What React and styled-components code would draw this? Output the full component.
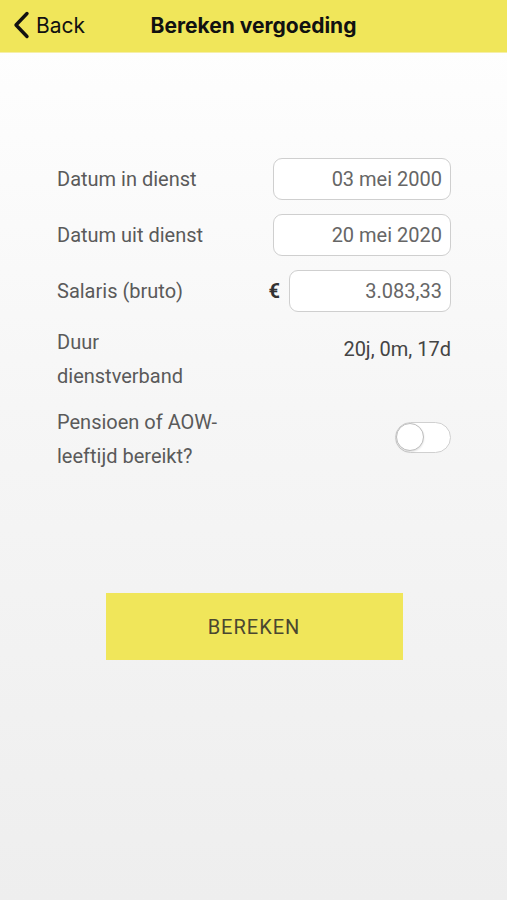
import React, { useState } from 'react';
import styled, { createGlobalStyle } from 'styled-components';

const GlobalStyle = createGlobalStyle`
  html, body {
    margin: 0;
    padding: 0;
  }
  body {
    min-height: 900px;
    background: linear-gradient(180deg, #ffffff 0%, #f6f6f6 45%, #eeeeee 100%);
    font-family: Roboto, "Liberation Sans", sans-serif;
  }
`;

const Page = styled.div`
  min-height: 900px;
  display: flex;
  flex-direction: column;
`;

const Header = styled.header`
  height: 53px;
  background: #f0e65a;
  border-bottom: 1px solid #f6efa8;
  display: grid;
  grid-template-columns: 1fr auto 1fr;
  align-items: center;
  padding-bottom: 2px;
  box-sizing: border-box;
  font-family: Inter, "Liberation Sans", sans-serif;
  color: #111;
`;

const BackButton = styled.button`
  justify-self: start;
  display: flex;
  align-items: center;
  gap: 6px;
  margin-left: 12px;
  padding: 0;
  border: none;
  background: none;
  font-family: inherit;
  font-size: 21px;
  color: #111;
  cursor: pointer;
`;

const Title = styled.h1`
  margin: 0;
  font-size: 21px;
  font-weight: 700;
`;

const Form = styled.main`
  padding: 105px 56px 0 57px;
  display: flex;
  flex-direction: column;
`;

const Row = styled.div`
  display: flex;
  align-items: ${(p) => (p.top ? 'flex-start' : 'center')};
  justify-content: space-between;
  margin-bottom: ${(p) => p.gap ?? 14}px;
`;

const Label = styled.div`
  font-size: 20px;
  line-height: 34px;
  color: #5a5a5a;
  width: ${(p) => p.width || 'auto'};
`;

const InputBox = styled.div`
  width: ${(p) => p.width}px;
  height: 42px;
  box-sizing: border-box;
  border: 1px solid #cfcfcf;
  border-radius: 9px;
  background: #fff;
  display: flex;
  align-items: center;
  justify-content: flex-end;
  padding-right: 8px;
  font-size: 20px;
  color: #666;
`;

const Money = styled.div`
  display: flex;
  align-items: center;
  gap: 9px;
`;

const Euro = styled.span`
  font-size: 20px;
  font-weight: 700;
  color: #333;
`;

const Value = styled.div`
  font-size: 20px;
  line-height: 34px;
  color: #444;
  padding-top: 7px;
`;

const Toggle = styled.button`
  width: 56px;
  height: 31px;
  padding: 0;
  border-radius: 16px;
  border: 1.5px solid #d0d0d0;
  background: ${(p) => (p.on ? '#f0e65a' : '#fff')};
  position: relative;
  cursor: pointer;
  margin-top: -4px;

  &::after {
    content: '';
    position: absolute;
    top: 0;
    left: ${(p) => (p.on ? '25px' : '0')};
    width: 28px;
    height: 28px;
    box-sizing: border-box;
    border-radius: 50%;
    border: 1.5px solid #bdbdbd;
    background: #fff;
    box-shadow: 0 1px 2px rgba(0, 0, 0, 0.12);
  }
`;

const SubmitButton = styled.button`
  align-self: center;
  margin-top: 120px;
  width: 297px;
  height: 67px;
  border: none;
  background: #f0e65a;
  font-family: Roboto, "Liberation Sans", sans-serif;
  font-size: 20px;
  letter-spacing: 1px;
  color: #4a4630;
  cursor: pointer;
`;

const ChevronLeft = () => (
  <svg width="18" height="28" viewBox="0 0 18 28">
    <polyline
      points="15,2.5 4,14 15,25.5"
      fill="none"
      stroke="#111"
      strokeWidth="3.4"
      strokeLinecap="round"
      strokeLinejoin="round"
    />
  </svg>
);

const App = () => {
  const [pension, setPension] = useState(false);

  return (
    <>
      <GlobalStyle />
      <Page>
        <Header>
          <BackButton>
            <ChevronLeft />
            Back
          </BackButton>
          <Title>Bereken vergoeding</Title>
          <span />
        </Header>

        <Form>
          <Row>
            <Label>Datum in dienst</Label>
            <InputBox width={178}>03 mei 2000</InputBox>
          </Row>
          <Row>
            <Label>Datum uit dienst</Label>
            <InputBox width={178}>20 mei 2020</InputBox>
          </Row>
          <Row gap={13}>
            <Label>Salaris (bruto)</Label>
            <Money>
              <Euro>€</Euro>
              <InputBox width={162}>3.083,33</InputBox>
            </Money>
          </Row>
          <Row top gap={12}>
            <Label width="150px">Duur dienstverband</Label>
            <Value>20j, 0m, 17d</Value>
          </Row>
          <Row gap={0}>
            <Label width="190px">Pensioen of AOW-leeftijd bereikt?</Label>
            <Toggle on={pension ? 1 : 0} onClick={() => setPension(!pension)} />
          </Row>
          <SubmitButton>BEREKEN</SubmitButton>
        </Form>
      </Page>
    </>
  );
};

export default App;
